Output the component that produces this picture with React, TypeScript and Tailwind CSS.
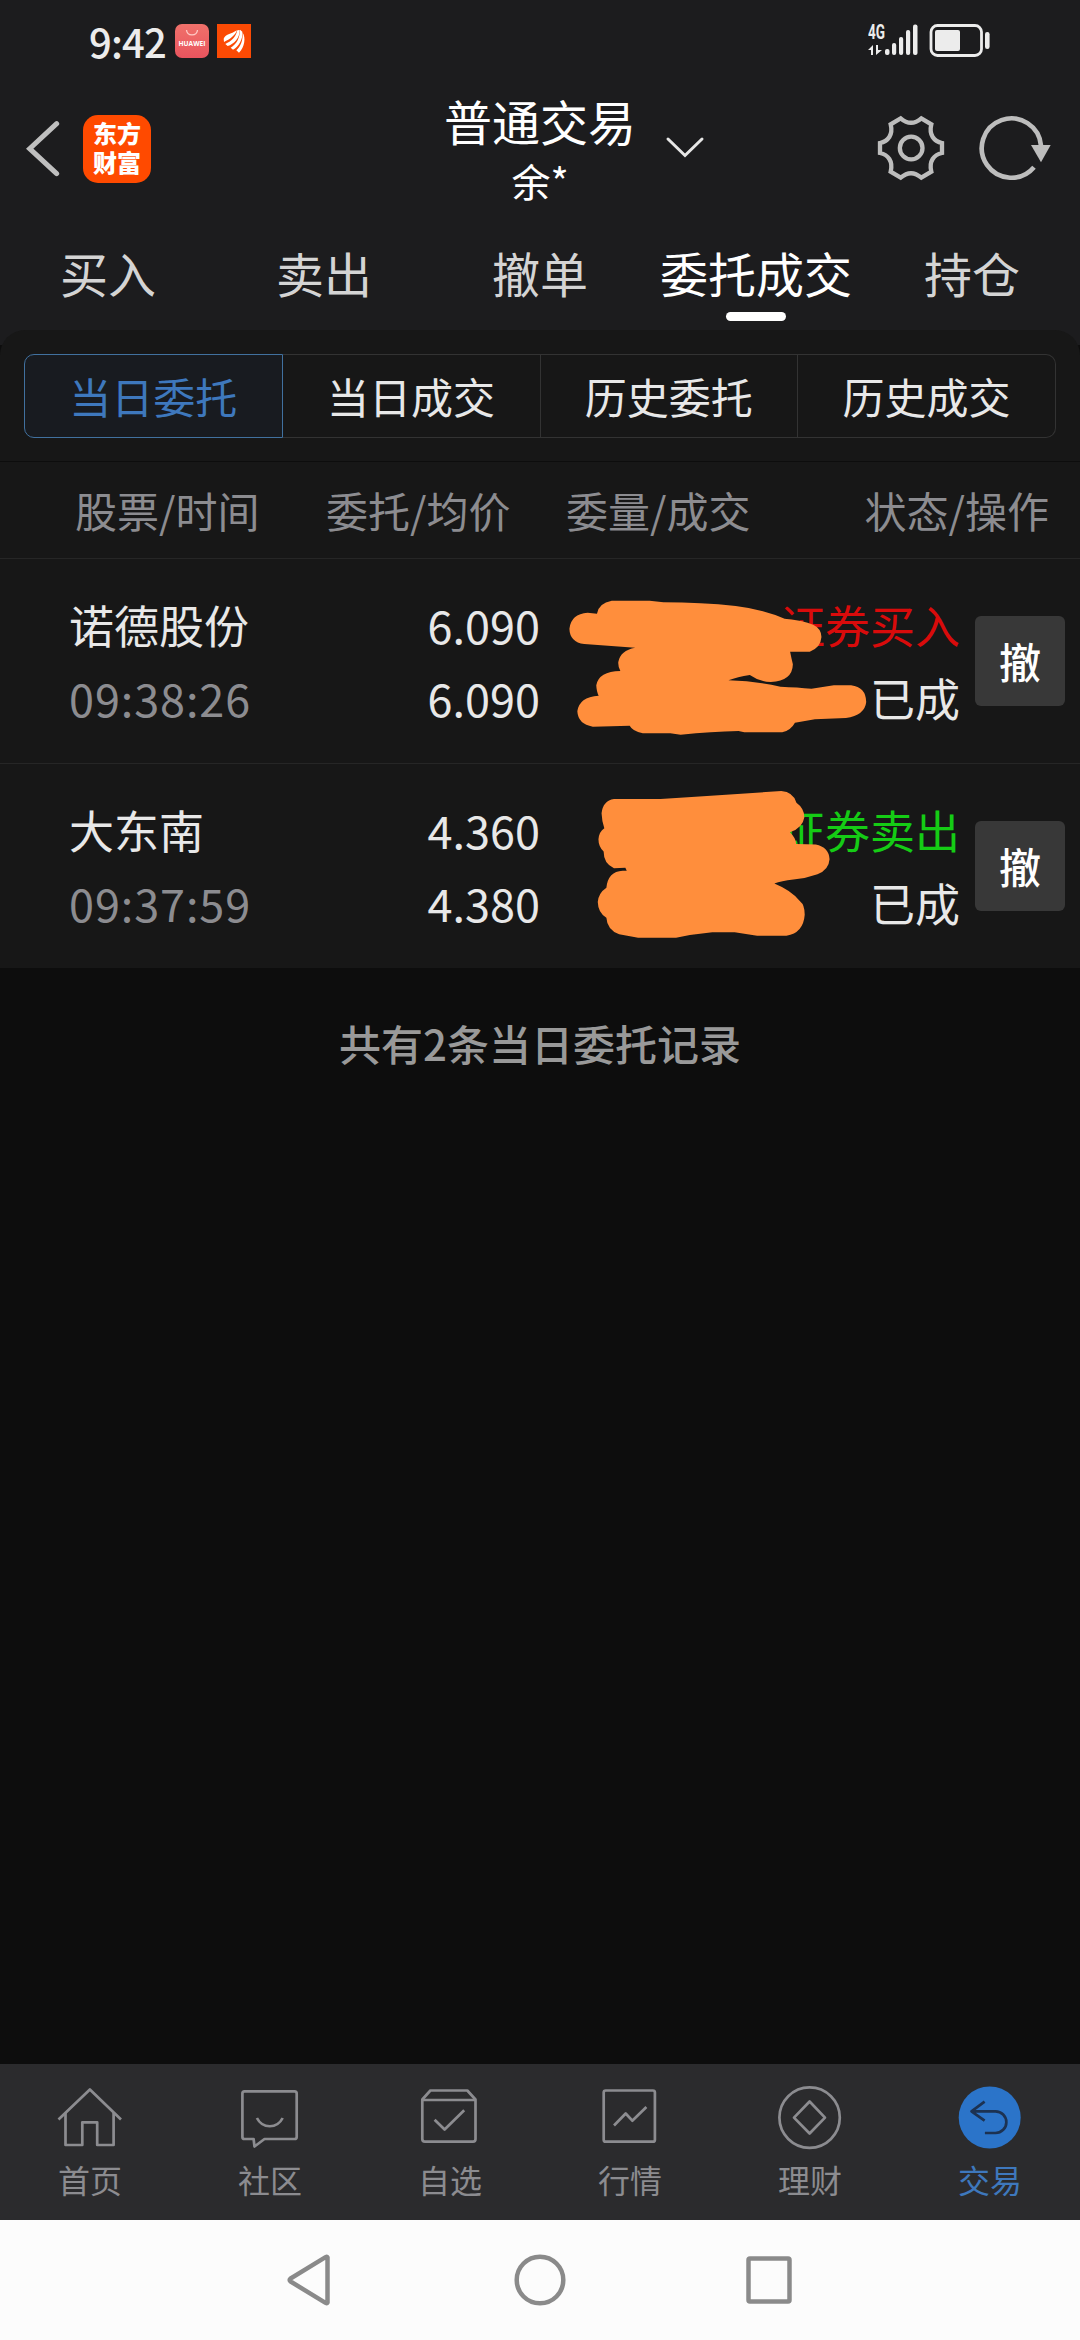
import type { ReactNode } from 'react'

const tabs = ['买入', '卖出', '撤单', '委托成交', '持仓']
const segments = ['当日委托', '当日成交', '历史委托', '历史成交']

const orders = [
  {
    name: '诺德股份',
    time: '09:38:26',
    price: '6.090',
    avg: '6.090',
    side: '证券买入',
    sideColor: 'text-[#d90b0b]',
    status: '已成',
  },
  {
    name: '大东南',
    time: '09:37:59',
    price: '4.360',
    avg: '4.380',
    side: '证券卖出',
    sideColor: 'text-[#15cc15]',
    status: '已成',
  },
]

const StatusBar = (): JSX.Element => (
  <div className="flex h-[82px] items-center pl-[89px] pr-[90px]">
    <span className="w-[78px] text-[40px] leading-[44px] font-medium tracking-[-0.8px] text-[#ececec] whitespace-nowrap">
      9:42
    </span>
    <div className="ml-[8px] flex h-[34px] w-[34px] flex-col items-center rounded-[7px] bg-linear-to-b from-[#f0716b] to-[#e9545e]">
      <svg className="mt-[5px] h-[8px] w-[14px]" viewBox="0 0 14 8" fill="none">
        <path d="M1.5 1 C2 7.5 12 7.5 12.5 1" stroke="#ffc9c5" strokeWidth="1.3" />
      </svg>
      <span className="mt-[3px] font-['Open_Sans'] text-[6.6px] leading-[8px] font-bold text-white">
        HUAWEI
      </span>
    </div>
    <svg className="ml-[8px] h-[34px] w-[34px]" viewBox="651 72 102 102">
      <rect x="651" y="72" width="102" height="102" fill="#fb4a04" />
      <path d="M671 116 C676 103 692 103 711 91 C705 107 690 118 672 126 Z" fill="#fff" />
      <path d="M676 132 C694 124 707 112 712 91 L719 90 C720 113 702 133 683 138 Z" fill="#fff" />
      <path d="M692 143 C710 132 719 115 720 89 L727 95 C729 118 716 140 699 149 Z" fill="#fff" />
      <path d="M709 151 C722 139 729 121 728 98 C738 113 734 141 717 158 Z" fill="#fff" />
    </svg>
    <svg className="ml-auto h-[50px] w-[122px]" viewBox="0 -8 122 50" fill="#ececec">
      <text
        x="0"
        y="15"
        fontFamily="Roboto, sans-serif"
        fontSize="20"
        fontWeight="700"
        textLength="17"
        lengthAdjust="spacingAndGlyphs"
      >
        4G
      </text>
      <path d="M0 26 L5 21 V31 H3 V26 Z M8 21 H10 V26 H14 L8 31 Z" />
      <rect x="17" y="25" width="4.5" height="6" rx="2" />
      <rect x="24" y="19" width="4.2" height="12" rx="2" />
      <rect x="31" y="13" width="4.2" height="18" rx="2" />
      <rect x="38" y="6" width="4.2" height="25" rx="2" />
      <rect x="45" y="0.5" width="4.5" height="30.5" rx="2" />
      <rect x="63" y="1.5" width="50.5" height="30" rx="6.5" fill="none" stroke="#ececec" strokeWidth="2.8" />
      <rect x="67" y="6" width="25" height="21" rx="2" />
      <rect x="117" y="8" width="4.6" height="17" rx="2.2" />
    </svg>
  </div>
)

const TitleBar = (): JSX.Element => (
  <div className="grid h-[136px] grid-cols-3 items-center">
    <div className="flex items-center pb-[3px] pl-[26px]">
      <svg className="h-[56px] w-[34px]" viewBox="78 362 102 168" fill="none">
        <path
          d="M170 370 L89 445 L170 520"
          stroke="#bfbfbf"
          strokeWidth="15"
          strokeLinecap="round"
        />
      </svg>
      <div className="ml-[23px] flex h-[68px] w-[68px] items-center justify-center rounded-[15px] bg-[#ff4a00] pb-[4px] text-[24px] leading-[29px] font-black text-white">
        <p>
          东方
          <br />
          财富
        </p>
      </div>
    </div>
    <div className="grid grid-cols-[1fr_auto_1fr] items-center">
      <span />
      <div className="flex flex-col items-center text-white">
        <span className="text-[48px] leading-[60px]">普通交易</span>
        <span className="text-[39px] leading-[60px]">余*</span>
      </div>
      <svg className="mb-[6px] ml-[29px] h-[24px] w-[40px]" viewBox="0 0 40 24" fill="none">
        <path d="M3 4 L20 20.500 L37 4" stroke="#e6e6e6" strokeWidth="3" strokeLinecap="round" />
      </svg>
    </div>
    <div className="flex items-center justify-end pb-[4px] pr-[28px]">
      <svg className="h-[68px] w-[70px]" viewBox="166 342 210 204" fill="none" stroke="#bdbdbd">
        <path
          d="M240 355 Q271 382 302 355 L332 373 C324 405 340 424 364 429 V459 C340 464 324 483 332 515 L302 533 Q271 506 240 533 L210 515 C218 483 202 464 178 459 V429 C202 424 218 405 210 373 Z"
          strokeWidth="13"
        />
        <circle cx="271.500" cy="444" r="34" strokeWidth="13" />
      </svg>
      <svg className="ml-[32px] h-[68px] w-[74px]" viewBox="472 342 222 204" fill="none">
        <path d="M640 502 A89 89 0 1 1 661 437" stroke="#bdbdbd" strokeWidth="14" />
        <path d="M631 435 H690 L661 487 Z" fill="#bdbdbd" />
      </svg>
    </div>
  </div>
)

const Tabs = ({ active }: { active: string }): JSX.Element => (
  <div className="grid h-[127px] grid-cols-5 pt-[24px]">
    {tabs.map((t) => (
      <div key={t} className="flex flex-col items-center">
        <span
          className={`text-[48px] leading-[60px] whitespace-nowrap ${
            t === active ? 'text-white' : 'text-[#d4d4d4]'
          }`}
        >
          {t}
        </span>
        {t === active && <div className="mt-[10px] h-[9px] w-[60px] rounded-full bg-white" />}
      </div>
    ))}
  </div>
)

const Segments = (): JSX.Element => (
  <div className="mx-[24px] flex h-[84px] text-[42px] leading-[82px]">
    {segments.map((s, i) => (
      <div
        key={s}
        className={`flex-1 border text-center ${
          i === 0
            ? 'rounded-l-[10px] border-[#41719f] bg-[#181b20] text-[#3e78bd]'
            : 'border-l-0 border-[#333333] text-[#e8e8e8] last:rounded-r-[10px]'
        }`}
      >
        {s}
      </div>
    ))}
  </div>
)

// hand-drawn marker strokes that hide the order quantities
const scribbles = [
  <svg
    key="0"
    className="absolute left-[567px] top-[38px] h-[140px] w-[303px]"
    viewBox="80 110 880 420"
    preserveAspectRatio="none"
    fill="#ff8e3c"
  >
    <path d="M210 121 L320 121 L360 126 Q470 126 570 137 Q650 147 712 175 Q765 180 795 193 Q819 205 819 230 Q817 262 785 274 L728 274 Q731 290 736 312 Q735 362 672 365 Q640 365 611 344 Q575 350 549 360 Q630 362 700 379 Q750 381 790 385 L855 375 L905 375 Q948 380 949 425 Q945 465 890 473 L800 477 L742 487 Q730 510 705 516 L595 516 L578 512 Q500 514 410 523 L380 519 L300 519 Q270 512 262 496 L155 499 Q112 492 110 453 Q115 410 172 406 Q166 395 165 375 Q172 333 235 332 Q228 320 229 305 Q235 270 278 262 L130 251 Q88 245 87 205 Q92 160 140 157 L167 160 Q172 128 210 121 Z" />
  </svg>,
  <svg
    key="1"
    className="absolute left-[595px] top-[24px] h-[153px] w-[238px]"
    viewBox="160 84 690 460"
    preserveAspectRatio="none"
    fill="#ff8e3c"
  >
    <path d="M215 117 L350 117 L440 111 L540 104 L700 93 Q735 96 744 128 Q767 145 767 172 Q762 205 725 217 Q743 235 743 252 Q775 252 800 254 Q838 262 840 298 Q838 330 805 343 Q770 356 735 359 Q700 364 680 371 Q730 392 755 425 Q768 435 768 465 Q764 520 715 528 L630 528 L565 518 L500 518 L435 526 L395 534 L285 534 L230 524 Q195 510 193 474 Q169 460 168 427 Q170 400 193 384 Q198 335 240 333 L252 333 L248 324 L215 325 Q185 312 185 275 Q170 260 170 238 Q172 215 187 205 Q180 185 179 160 Q183 122 215 117 Z" />
  </svg>,
]

const OrderRow = ({ order, mask }: { order: (typeof orders)[0]; mask: ReactNode }): JSX.Element => (
  <div className="relative flex h-[205px] items-center border-b border-[#262626] pl-[69px] pr-[15px] text-[45px] leading-[73px] text-[#e8e8e8] last:h-[204px] last:border-b-0">
    <div className="flex w-[240px] flex-col">
      <span>{order.name}</span>
      <span className="tracking-[0.9px] text-[#8c8c90]">{order.time}</span>
    </div>
    <div className="flex w-[231px] flex-col items-end pb-[1px]">
      <span>{order.price}</span>
      <span>{order.avg}</span>
    </div>
    <div className="flex flex-1 flex-col items-end pr-[15px]">
      <span className={order.sideColor}>{order.side}</span>
      <span>{order.status}</span>
    </div>
    <button className="h-[90px] w-[90px] rounded-[6px] bg-[#383838] text-[42px] leading-[88px] font-medium text-white">
      撤
    </button>
    {mask}
  </div>
)

const navItems: { label: string; icon: ReactNode }[] = [
  {
    label: '首页',
    icon: (
      <>
        <path d="M0.500 33.500 L31.900 3.500 L63 33.500" />
        <path d="M7.500 27 V59 H24.300 V36.300 H39.200 V59 H55.600 V27" />
      </>
    ),
  },
  {
    label: '社区',
    icon: (
      <>
        <path d="M6.500 5.300 H56.500 Q58.700 5.300 58.700 7.500 V51 Q58.700 53 56.500 53 H26.500 L16.500 60.500 L15.600 53 H6.500 Q4.400 53 4.400 51 V7.500 Q4.400 5.300 6.500 5.300 Z" />
        <path d="M18.900 32 C24.500 43 39 43 44.700 32" />
      </>
    ),
  },
  {
    label: '自选',
    icon: (
      <>
        <path d="M4.300 13.500 L12.400 4.500 H49.300 L57.500 13.500 V53 Q57.500 55.700 55 55.700 H7 Q4.300 55.700 4.300 53 Z" />
        <path d="M4.300 14 H57.500" />
        <path d="M16.600 33.700 L26.600 43.500 L46.200 24.300" />
      </>
    ),
  },
  {
    label: '行情',
    icon: (
      <>
        <rect x="5.700" y="4.500" width="51.200" height="51.200" rx="2" />
        <path d="M16 39.500 L27.700 27.500 L34.300 34.700 L48.400 21" />
      </>
    ),
  },
  {
    label: '理财',
    icon: (
      <>
        <circle cx="31.600" cy="31.600" r="30.200" />
        <path d="M31.600 15.500 L47 31.600 L31.600 47.500 L16 31.600 Z" />
      </>
    ),
  },
  {
    label: '交易',
    icon: (
      <>
        <circle cx="31.700" cy="31.500" r="31" fill="#2b74c9" stroke="none" />
        <path
          d="M26.600 15.700 L13.500 25.300 L26.600 34.700 M13.500 25.300 H37.500 A10.800 10.800 0 0 1 37.500 47 H26.900"
          stroke="#1c3252"
        />
      </>
    ),
  },
]

const BottomNav = (): JSX.Element => (
  <div className="grid h-[156px] grid-cols-6 bg-[#2b2b2d] pt-[22px]">
    {navItems.map(({ label, icon }) => (
      <div
        key={label}
        className={`flex flex-col items-center ${label === '交易' ? 'text-[#3e78bd]' : 'text-[#8c8c90]'}`}
      >
        <svg
          className="h-[64px] w-[64px] overflow-visible"
          viewBox="0 0 64 64"
          fill="none"
          stroke="currentColor"
          strokeWidth="2.700"
          strokeLinejoin="round"
        >
          {icon}
        </svg>
        <span className="mt-[7px] text-[32px] leading-[44px]">{label}</span>
      </div>
    ))}
  </div>
)

const SystemNav = (): JSX.Element => (
  <div className="flex h-[120px] items-center justify-center bg-[#fcfcfc]">
    <svg className="h-[52px] w-[514px]" viewBox="0 0 514 52" fill="none" stroke="#8a8a8a" strokeWidth="4.500">
      <path d="M44.500 3.500 V48.500 Q44 49.500 42.500 48.800 L7.500 27.500 Q6 26 7.500 24.500 L42.500 3.200 Q44 2.500 44.500 3.500 Z" />
      <circle cx="257" cy="26" r="23.300" />
      <rect x="465.500" y="4.500" width="41" height="43" rx="1.500" />
    </svg>
  </div>
)

export default function App(): JSX.Element {
  return (
    <div className="flex h-[2340px] w-[1080px] flex-col overflow-hidden bg-[#0d0d0d] font-['Noto_Sans_CJK_SC',sans-serif]">
      <div className="bg-[#1c1c1e]">
        <StatusBar />
        <TitleBar />
        <Tabs active="委托成交" />
      </div>
      <div className="-mt-[15px] rounded-t-[25px] bg-[#171717] pt-[24px]">
        <Segments />
        <div className="mt-[23px] grid h-[98px] grid-cols-[251px_240px_1fr_auto] border-t border-b border-t-[#0d0d0d] border-b-[#262626] pl-[75px] pr-[31px] text-[42px] leading-[96px] text-[#8c8c90]">
          <span>股票/时间</span>
          <span>委托/均价</span>
          <span>委量/成交</span>
          <span>状态/操作</span>
        </div>
        <div>
          {orders.map((o, i) => (
            <OrderRow key={o.name} order={o} mask={scribbles[i]} />
          ))}
        </div>
      </div>
      <p className="mt-[43px] text-center text-[42px] leading-[64px] font-medium text-[#999999]">
        共有2条当日委托记录
      </p>
      <div className="mt-auto">
        <BottomNav />
        <SystemNav />
      </div>
    </div>
  )
}
